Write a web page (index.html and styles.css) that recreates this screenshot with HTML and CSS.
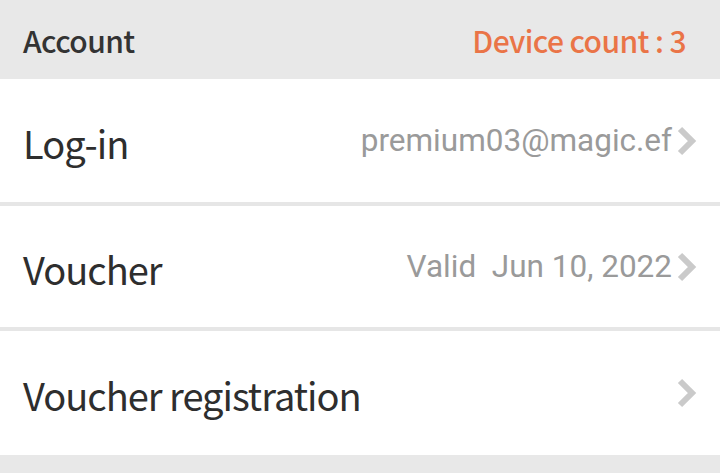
FILE: index.html
```html
<!DOCTYPE html>
<html lang="en">
<head>
    <meta charset="UTF-8">
    <meta name="viewport" content="width=device-width, initial-scale=1.0">
    <title>Account</title>
    <link rel="stylesheet" href="styles.css">
</head>
<body>

    <div class="section-head">
        <span class="section-title">Account</span>
        <span class="device-count">Device count : 3</span>
    </div>

    <div class="menu">
        <div class="row row-login">
            <span class="label">Log-in</span>
            <span class="value">premium03@magic.ef</span>
            <svg class="chevron" viewBox="0 0 22 30"><path d="M4 3 L16 15 L4 27"/></svg>
        </div>
        <div class="row row-voucher">
            <span class="label">Voucher</span>
            <span class="value">Valid&nbsp; Jun 10, 2022</span>
            <svg class="chevron" viewBox="0 0 22 30"><path d="M4 3 L16 15 L4 27"/></svg>
        </div>
        <div class="row row-register">
            <span class="label">Voucher registration</span>
            <span class="value"></span>
            <svg class="chevron" viewBox="0 0 22 30"><path d="M4 3 L16 15 L4 27"/></svg>
        </div>
    </div>

    <div class="bottom-gap"></div>

</body>
</html>
```

FILE: styles.css
```css
body {
    margin: 0;
    background: #e8e8e8;
    font-family: "Noto Sans CJK KR", "Noto Sans", sans-serif;
    overflow: hidden;
}

.section-head {
    height: 79px;
    display: flex;
    align-items: center;
    justify-content: space-between;
    padding: 0 34px 0 23px;
    background: #e8e8e8;
}

.section-title {
    font-size: 30px;
    font-weight: 500;
    letter-spacing: -0.6px;
    color: #333;
}

.device-count {
    font-size: 30px;
    font-weight: 500;
    letter-spacing: -0.6px;
    color: #ea7447;
}

.menu {
    display: flex;
    flex-direction: column;
    gap: 4px;
    background: #e6e6e6;
}

.row {
    height: 123px;
    display: flex;
    align-items: center;
    padding: 0 22px 0 23px;
    background: #fff;
}

.row-voucher {
    height: 121px;
}

.row-register {
    height: 124px;
}

.label {
    flex: 1;
    font-size: 38px;
    letter-spacing: -1px;
    color: #2e2e2e;
    padding-top: 3px;
}

.value {
    font-family: Roboto, sans-serif;
    font-size: 31.5px;
    color: #9a9a9a;
}

.chevron {
    width: 22px;
    height: 30px;
    margin-left: 4px;
    fill: none;
    stroke: #cacaca;
    stroke-width: 6;
}

.bottom-gap {
    height: 19px;
}
```
